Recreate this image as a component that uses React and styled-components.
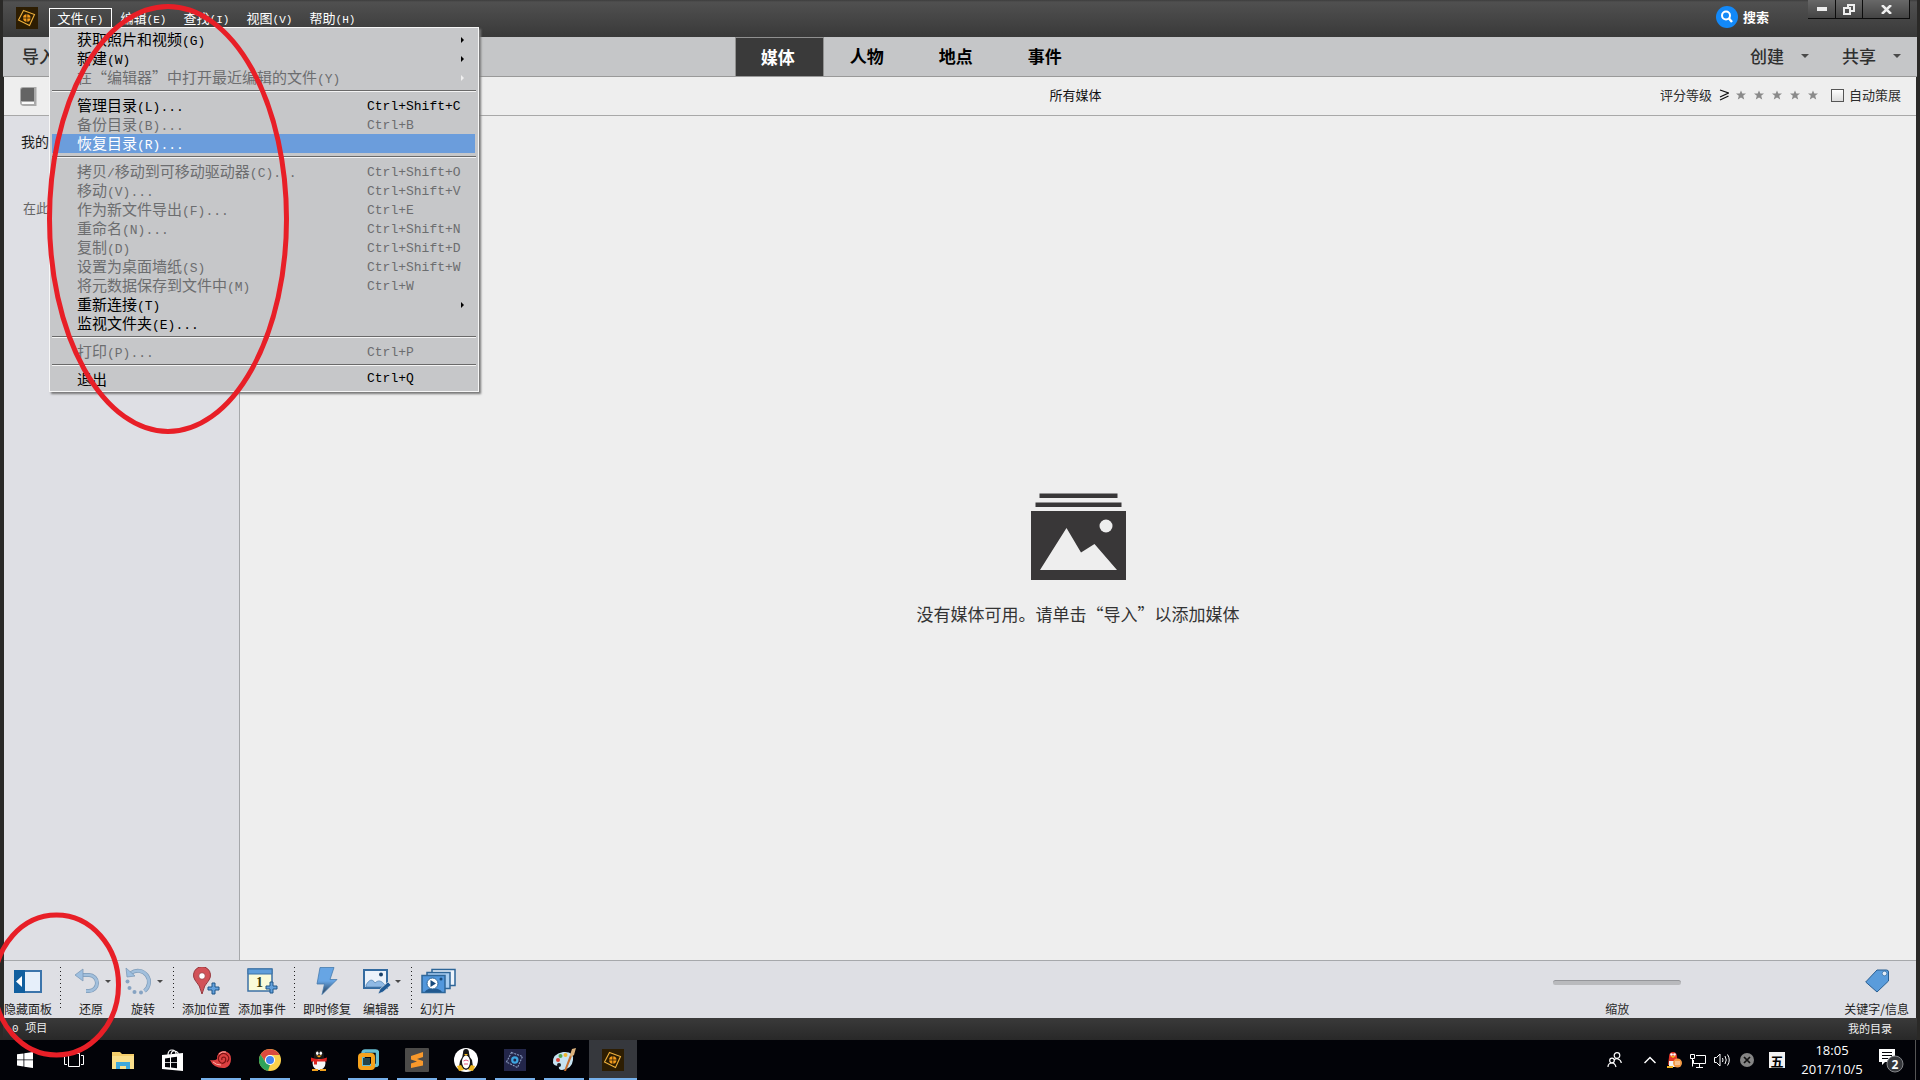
import React from "react";
import styled, { createGlobalStyle, css } from "styled-components";

const sans = `"Noto Sans CJK SC", "Noto Sans", sans-serif`;
const mono = `"Liberation Mono", "Noto Sans CJK SC", monospace`;

const GlobalStyle = createGlobalStyle`
  *, *::before, *::after { box-sizing: border-box; }
  html, body { margin: 0; height: 100%; }
  body { background: #2b2b2b; font-family: ${sans}; font-size: 13px; color: #2c2c2c; overflow: hidden; }
  #root { height: 100%; }
  button, input { font: inherit; color: inherit; margin: 0; }
  button { background: none; border: 0; padding: 0; white-space: nowrap; }
  svg { display: block; flex: none; }
`;

const Screen = styled.div`
  position: relative;
  display: flex;
  flex-direction: column;
  height: 100vh;
`;

const AppWindow = styled.div`
  flex: 1;
  display: flex;
  flex-direction: column;
  min-height: 0;
  padding: 0 3px;
  background: #2a2927;
`;

/* ---------- title bar ---------- */

const TitleBar = styled.header`
  display: flex;
  align-items: flex-start;
  height: 37px;
  padding: 0 7px 0 13px;
  background: linear-gradient(#3d3d3d 0, #505050 2px, #393939 100%);
  color: #fff;
`;

const AppLogo = styled.div`
  padding-top: 7px;
  margin-right: 11px;
`;

const MenuBar = styled.nav`
  display: flex;
  padding-top: 8px;
  flex: 1;
`;

const MenuSlot = styled.div`
  position: relative;
`;

const MenuButton = styled.button`
  width: 63px;
  height: 20px;
  padding-bottom: 2px;
  line-height: 17px;
  border: 1px solid ${(p) => (p.$open ? "#fff" : "transparent")};
  border-bottom: 0;
  font-size: 13px;
  color: #fff;
`;

const Latin = styled.span`
  font-family: ${mono};
  font-size: ${(p) => (p.$small ? "11px" : "13px")};
`;

const Dropdown = styled.div`
  position: absolute;
  z-index: 5;
  top: 19px;
  left: 0;
  width: 430px;
  padding: 2px;
  border: 1px solid #f6f6f6;
  background: #c6c7c9;
  box-shadow: 2px 2px 2px #777;
`;

const MenuItem = styled.button`
  display: grid;
  grid-template-columns: 1fr 97px;
  align-items: center;
  width: 423px;
  height: 19px;
  padding: 0 11px 2px 25px;
  text-align: left;
  font-size: 15px;
  line-height: 17px;
  color: ${(p) => (p.$active ? "#fff" : p.disabled ? "#6c6d6f" : "#000")};
  background: ${(p) => (p.$active ? "#6b9ddc" : "transparent")};
`;

const MenuRule = styled.hr`
  height: 2px;
  margin: 3px 0 4px;
  border: 0;
  border-top: 1px solid #6a6a6a;
  background: #f4f4f4;
`;

const Arrow = styled.span`
  justify-self: end;
  border: 3px solid transparent;
  border-left-color: ${(p) => (p.$dim ? "#efefef" : "#000")};
  border-right: 0;
`;

const SearchButton = styled.button`
  display: flex;
  align-items: center;
  gap: 5px;
  height: 33px;
  margin-right: 39px;
  font-size: 13px;
  line-height: 18px;
  font-weight: 700;
`;

const WindowButtons = styled.div`
  display: flex;
  border: 1px solid #0c0c0c;
  border-top: 0;
  border-left: 0;
`;

const WindowButton = styled.button`
  display: grid;
  place-items: center;
  width: ${(p) => (p.$wide ? "47px" : "27px")};
  height: 18px;
  background: linear-gradient(#686868, #444);

  & + & { border-left: 1px solid #0c0c0c; }
`;

/* ---------- mode bar ---------- */

const ModeBar = styled.div`
  display: grid;
  grid-template-columns: 47fr auto 53fr;
  height: 40px;
  background: #c5c6c8;
  border-bottom: 1px solid #999;
  font-size: 17px;
`;

const ModeSide = styled.div`
  display: flex;
  align-items: center;
  justify-content: ${(p) => (p.$end ? "flex-end" : "flex-start")};
  padding: 0 16px 2px 19px;
`;

const ModeAction = styled.button`
  display: flex;
  align-items: center;
  gap: 17px;
  font-weight: 500;
  color: #2f2f2f;
`;

const ModeActions = styled.div`
  display: flex;
  gap: 33px;
`;

const Caret = styled.span`
  border: ${(p) => (p.$big ? "4px" : "3px")} solid transparent;
  border-top-color: #4a4a4a;
  border-bottom: 0;
`;

const Modes = styled.div`
  display: flex;
`;

const ModeTab = styled.button`
  width: 89px;
  padding: 0 4px 2px 0;
  font-weight: 700;
  color: ${(p) => (p.$on ? "#fff" : "#000")};
  ${(p) =>
    p.$on &&
    css`
      background: #3a3a3a;
      border: 1px solid #909090;
      border-bottom: 0;
    `}
`;

/* ---------- filter bar ---------- */

const Inset = styled.div`
  display: flex;
  flex-direction: column;
  flex: 1;
  min-height: 0;
  padding: 0 1px;
`;

const FilterBar = styled.div`
  display: grid;
  grid-template-columns: 239px 1fr auto;
  align-items: center;
  height: 39px;
  padding: 0 15px 2px 0;
  background: #eee;
  border-bottom: 1px solid #a8a8a8;
`;

const FilterLead = styled.div`
  padding: 2px 0 0 16px;
`;

const FilterTitle = styled.h1`
  margin: 0;
  padding-left: 248px;
  text-align: center;
  font-size: 13px;
  font-weight: 400;
  line-height: 20px;
  color: #111;
`;

const Rating = styled.div`
  display: flex;
  align-items: center;
  gap: 7px;
  line-height: 20px;
`;

const Stars = styled.div`
  display: flex;
  gap: 8px;
`;

const CheckLabel = styled.label`
  display: flex;
  align-items: center;
  gap: 5px;
  margin-left: 6px;
`;

const CheckBox = styled.input`
  appearance: none;
  width: 13px;
  height: 13px;
  border: 1px solid #555;
  background: linear-gradient(#fff, #ddd);
`;

/* ---------- workspace ---------- */

const Workspace = styled.div`
  display: grid;
  grid-template-columns: 236px 1fr;
  flex: 1;
  min-height: 0;
`;

const Sidebar = styled.aside`
  padding: 15px 17px;
  background: #dedfe4;
  border-right: 1px solid #a6a8ab;
`;

const SidebarTitle = styled.h2`
  margin: 0 0 47px;
  font-size: 14px;
  font-weight: 400;
  line-height: 20px;
  color: #1c1c1c;
`;

const SidebarHint = styled.p`
  margin: 0;
  padding-left: 2px;
  font-size: 13px;
  line-height: 20px;
  color: #666;
`;

const Canvas = styled.main`
  display: flex;
  flex-direction: column;
  align-items: center;
  justify-content: center;
  gap: 22px;
  padding-top: 42px;
  background: #eee;
`;

const EmptyText = styled.p`
  margin: 0;
  font-size: 17px;
  line-height: 24px;
  color: #333;
`;

/* ---------- tool bar ---------- */

const ToolBar = styled.footer`
  display: flex;
  justify-content: space-between;
  height: 58px;
  padding: 6px 7px 0 0;
  background: #dedfe4;
  border-top: 1px solid #a6a8ab;
`;

const ToolGroup = styled.div`
  display: flex;
  gap: ${(p) => (p.$far ? "163px" : "8px")};
`;

const Tool = styled.button`
  display: flex;
  flex-direction: column;
  align-items: center;
  gap: 6px;
  min-width: ${(p) => (p.$menu ? "44px" : "0")};
  font-size: 12px;
  line-height: 16px;
  color: #222;
`;

const ToolIcon = styled.span`
  display: flex;
  align-items: center;
  justify-content: center;
  gap: 4px;
  height: 28px;
  padding-left: ${(p) => (p.$menu ? "2px" : "0")};
`;

const ToolRule = styled.span`
  width: 1px;
  height: 42px;
  background: repeating-linear-gradient(#222 0 1px, transparent 1px 4px);
`;

const ZoomField = styled.label`
  display: flex;
  flex-direction: column;
  align-items: center;
  gap: 6px;
  font-size: 12px;
  line-height: 16px;
`;

const ZoomSlot = styled.span`
  display: flex;
  align-items: center;
  height: 28px;
  padding-top: 2px;
`;

const ZoomRange = styled.input`
  appearance: none;
  width: 128px;
  height: 5px;
  border-radius: 3px;
  background: #b9babd;
  border-top: 1px solid #95969a;

  &::-webkit-slider-thumb { appearance: none; width: 0; height: 0; }
`;

const StatusBar = styled.div`
  display: flex;
  justify-content: space-between;
  align-items: center;
  height: 22px;
  padding: 0 25px 2px 9px;
  background: linear-gradient(#3a3a3a, #282828);
  font-size: 11px;
  line-height: 18px;
  color: #eee;
`;

/* ---------- system task bar ---------- */

const TaskBar = styled.div`
  display: flex;
  justify-content: space-between;
  height: 40px;
  background: #020308;
`;

const TaskList = styled.div`
  display: flex;
  gap: 1px;
  padding-left: 1px;
`;

const Task = styled.button`
  display: grid;
  place-items: center;
  width: 48px;
  height: 40px;
  position: relative;
  background: ${(p) => (p.$active ? "#36383d" : "transparent")};
  ${(p) =>
    (p.$running || p.$active) &&
    css`
      &::after {
        content: "";
        position: absolute;
        left: ${p.$active ? "0" : "4px"};
        right: ${p.$active ? "0" : "4px"};
        bottom: 0;
        height: 2px;
        background: #76b0ea;
      }
    `}
`;

const Tray = styled.div`
  display: flex;
  align-items: center;
  padding-right: 11px;
  border-right: 1px solid #555;
  margin-right: 4px;
  color: #fff;
`;

const TrayIcons = styled.div`
  display: flex;
  align-items: center;
  gap: 8px;
`;

const TrayButton = styled.button`
  display: grid;
  place-items: center;
  min-width: 16px;
  height: 24px;
  margin-right: ${(p) => (p.$apart ? "12px" : "0")};
`;

const InputMode = styled.button`
  width: 16px;
  height: 16px;
  margin: 0 16px 0 6px;
  background: #f2f2f2;
  color: #000;
  font-size: 13px;
  font-weight: 700;
  line-height: 15px;
`;

const Clock = styled.time`
  font-family: "Open Sans", "Noto Sans", sans-serif;
  font-size: 13px;
  line-height: 19px;
  text-align: center;
  width: 62px;
  margin-right: 16px;
`;

const Markup = styled.svg`
  position: absolute;
  left: 0;
  top: ${(p) => (p.$low ? "auto" : "0")};
  bottom: ${(p) => (p.$low ? "0" : "auto")};
  z-index: 10;
  pointer-events: none;
  fill: none;
  stroke: #e81f27;
  stroke-width: 5;
`;

/* ---------- drawings ---------- */

const ElementsLogo = ({ blue }) => {
  const c = blue ? "#8b9cc0" : "#eeb03c";
  const d = blue ? "#3da6e0" : "#f29a1c";
  return (
    <svg width="22" height="22" viewBox="0 0 22 22">
      <rect width="22" height="22" fill={blue ? "#23264a" : "#2d1d02"} />
      <path d="M7.500 3.500 18.500 7.500 13.500 18.500 2.500 13Z" fill="none" stroke={c} strokeWidth="1.100" strokeDasharray={blue ? "2 1" : "none"} />
      <circle cx="10.800" cy="11" r="3.700" fill={d} />
      {blue ? <circle cx="10.800" cy="11" r="1.500" fill="#23264a" /> : <path d="M10.800 6.500v9M6.300 11h9" stroke="#2d1d02" strokeWidth=".8" />}
    </svg>
  );
};

const SearchIcon = () => (
  <svg width="22" height="22" viewBox="0 0 22 22" fill="none">
    <circle cx="11" cy="11" r="11" fill="#1389f8" />
    <circle cx="10" cy="9.500" r="4" stroke="#fff" strokeWidth="2" />
    <path d="m13 12.500 3 3.500" stroke="#fff" strokeWidth="2.400" />
  </svg>
);

const BookIcon = () => (
  <svg width="17" height="19" viewBox="0 0 17 19">
    <path d="M3 0h13.500v19H4Q0 19 0 15V3Q0 0 3 0" fill="#aaa" />
    <path d="M3 1h11v13H1V3Q1 1 3 1" fill="#646464" />
    <path d="M2 15h12v2H3Q1 17 2 15" fill="#fafafa" />
  </svg>
);

const Star = () => (
  <svg width="10" height="10" viewBox="0 0 10 10">
    <path d="m5 .5 1.300 3H10L7.200 5.700 8.200 9.500 5 7.400 1.800 9.500l1-3.800L0 3.500h3.700Z" fill="#8a8a8a" />
  </svg>
);

const AtLeast = () => (
  <svg width="10" height="12" viewBox="0 0 10 12" fill="none" stroke="#111" strokeWidth="1.200">
    <path d="m1 1 8.500 3L1 8M1 11l8.500-4" />
  </svg>
);

const MediaIcon = () => (
  <svg width="95" height="87" viewBox="0 0 95 87" fill="#393738">
    <path d="M8.500 0.500h78v4.500h-78zM4.500 9.500h86v4.500h-86zM0 18h95v69H0z" />
    <path d="m9 77 26.500-42L50 59.500l13.500-8.500L86 77Z" fill="#eee" />
    <circle cx="75" cy="33" r="6.500" fill="#eee" />
  </svg>
);

const PanelIcon = () => (
  <svg width="28" height="23" viewBox="0 0 28 23">
    <path d="M1 1h26v21H1z" fill="#e6effa" stroke="#3b74ab" strokeWidth="2" />
    <path d="M0 0h11v23H0z" fill="#115f9f" />
    <path d="M8 6v11l-6-5.500z" fill="#fff" />
  </svg>
);

const UndoIcon = () => (
  <svg width="28" height="26" viewBox="0 0 28 26" fill="none">
    <path d="M10 7h6a8 8 0 0 1 0 16h-3" stroke="#7e9bb8" strokeWidth="4" />
    <path d="M10 7h6a8 8 0 0 1 0 16h-3" stroke="#a1bfdc" strokeWidth="2.600" />
    <path d="M10 1v12L2 7z" fill="#9dbfe0" stroke="#7e9bb8" strokeWidth=".8" />
  </svg>
);

const RotateIcon = () => (
  <svg width="28" height="28" viewBox="0 0 28 28" fill="none">
    <path d="M6 6a10.500 10.500 0 1 1 13.500 18" stroke="#7e9bb8" strokeWidth="4" />
    <path d="M6 6a10.500 10.500 0 1 1 13.500 18" stroke="#a1bfdc" strokeWidth="2.600" />
    <path d="M1 1 2 10l8-1z" fill="#9dbfe0" stroke="#7e9bb8" strokeWidth=".8" />
    <g fill="#86a3c2">
      <circle cx="2.500" cy="14.500" r="2" />
      <circle cx="4.500" cy="21" r="2" />
      <circle cx="9.500" cy="25" r="2" />
      <circle cx="16" cy="25.500" r="2" />
    </g>
  </svg>
);

const plus = "M4 0h3v4h4v3H7v4H4V7H0V4h4z";

const PinIcon = () => (
  <svg width="28" height="28" viewBox="0 0 28 28">
    <path d="M10 27Q8 18 3 13A8.500 8.500 0 1 1 17 13Q12 18 10 27" fill="#d25258" stroke="#96363c" />
    <circle cx="10" cy="9" r="3.300" fill="#fff" stroke="#96363c" strokeWidth=".8" />
    <path d={plus} transform="translate(16 16)" fill="#63a0dc" stroke="#1f5688" />
  </svg>
);

const EventIcon = () => (
  <svg width="31" height="26" viewBox="0 0 31 26">
    <path d="M1 1h24v22H1z" fill="#fafbd9" stroke="#3c72a5" strokeWidth="1.500" />
    <path d="M1 1h24v5H1z" fill="#5f9edb" stroke="#3c72a5" />
    <text x="9" y="19" fontFamily="Liberation Serif, serif" fontWeight="700" fontSize="14" fill="#3b3d10">1</text>
    <path d={plus} transform="translate(19 14)" fill="#63a0dc" stroke="#1f5688" />
  </svg>
);

const BoltIcon = () => (
  <svg width="22" height="28" viewBox="0 0 22 28">
    <defs>
      <linearGradient id="bolt" x2="0" y2="1">
        <stop offset=".5" stopColor="#67a5e4" />
        <stop offset="1" stopColor="#24394f" />
      </linearGradient>
    </defs>
    <path d="M4 .5h14L14 12.500h7L6 27.500 8.500 17H1z" fill="url(#bolt)" stroke="#467bad" strokeWidth=".8" />
  </svg>
);

const EditorIcon = () => (
  <svg width="28" height="27" viewBox="0 0 28 27">
    <path d="M1 2h23v18H1z" fill="#ecf2fa" stroke="#346ba0" strokeWidth="2" />
    <path d="M3 17c3-5 6-7 9-2 3-3 6-3 10 2v2H3z" fill="#8fb9e4" stroke="#4b7dab" strokeWidth=".7" />
    <circle cx="18" cy="6.500" r="2" fill="#173f68" />
    <path d="m15 26 2-5 8-7 3 3-8 7z" fill="#215a93" stroke="#dedfe4" strokeWidth=".7" />
  </svg>
);

const SlidesIcon = () => (
  <svg width="35" height="26" viewBox="0 0 35 26" stroke="#2e6698">
    <path d="M11 1.500h23v16H11z" fill="#eff5fc" strokeWidth="1.500" />
    <path d="M6 4.500h23v16H6z" fill="#a8cdf0" strokeWidth="1.500" />
    <path d="M1 7.500h23v17H1z" fill="#5297dc" strokeWidth="1.500" />
    <path d="M4 24c2-5 14-5 17 0z" fill="#21598f" stroke="none" />
    <circle cx="11.500" cy="15.500" r="5.500" fill="#fff" />
    <path d="M9.500 12v7l5.500-3.500z" fill="#174a7c" stroke="none" />
    <circle cx="20" cy="11" r="1.500" fill="#174a7c" stroke="none" />
  </svg>
);

const TagIcon = () => (
  <svg width="24" height="24" viewBox="0 0 24 24">
    <path d="M12 1h9.500q2 0 2 2v9L12 23 .7 13z" fill="#5a9cdb" stroke="#2a5f92" />
    <circle cx="19.500" cy="4.500" r="2.300" fill="#e6eef8" stroke="#2a5f92" strokeWidth=".6" />
  </svg>
);

const StartIcon = () => (
  <svg width="16" height="16" viewBox="0 0 16 16" fill="#fff">
    <path d="M0 2.300 6.500 1.400v6.100H0zM7.300 1.300 16 0v7.500H7.300zM0 8.300h6.500v6.200L0 13.600zM7.300 8.300H16V16l-8.700-1.300z" />
  </svg>
);

const TaskViewIcon = () => (
  <svg width="20" height="14" viewBox="0 0 20 14" fill="none" stroke="#fff">
    <path d="M4.500.5h11v13h-11zM3 2.500H.5v9H3M17 2.500h2.500v9H17" />
  </svg>
);

const FolderIcon = () => (
  <svg width="22" height="19" viewBox="0 0 22 19">
    <path d="M0 1h8l2 2h12v15H0z" fill="#f5cf6b" />
    <path d="M0 5h22v13H0z" fill="#fbe08c" />
    <path d="M4 11h14v7h-4v-3H8v3H4z" fill="#3fa9dd" />
  </svg>
);

const StoreIcon = () => (
  <svg width="21" height="23" viewBox="0 0 21 23">
    <path d="M6 6Q6 1 10 1t4 4M9 5q1-4 4-3 4 1 3 4" fill="none" stroke="#fff" strokeWidth="1.200" />
    <path d="M0 6 21 4v18L0 20z" fill="#fff" />
    <path d="m3 9.500 5-.7v4.400H3zM9 8.600l6-.8v5.400H9zM3 14h5v4.400l-5-.5zM9 14h6v5.200l-6-.7z" fill="#020308" />
  </svg>
);

const SnailIcon = () => (
  <svg width="22" height="20" viewBox="0 0 22 20">
    <path d="M0 10q5 1 7-1 0-8 7-8 7 1 7 8t-6 9q-11 1-15-8" fill="#dc4040" />
    <path d="M17 12q3-3 1-6-3-4-7-2-4 3-2 7 3 4 6 1 2-4-1-5-3 0-2 3" fill="none" stroke="#7b1212" strokeWidth="1.200" />
    <path d="M9 4q3-3 7-2M3 12q3 3 8 3" stroke="#ffb0a8" fill="none" />
  </svg>
);

const ChromeIcon = () => (
  <svg width="22" height="22" viewBox="0 0 22 22">
    <circle cx="11" cy="11" r="11" fill="#fbd04b" />
    <path d="M1.500 5.500A11 11 0 0 1 20.600 6H11a5 5 0 0 0-4.500 7z" fill="#dc4b3e" />
    <path d="M1.500 5.500 6.700 13.500 11 16l-2 5.900A11 11 0 0 1 1.500 5.500" fill="#2fa35a" />
    <circle cx="11" cy="11" r="5" fill="#fff" />
    <circle cx="11" cy="11" r="4" fill="#4384ee" />
  </svg>
);

const QQIcon = () => (
  <svg width="18" height="21" viewBox="0 0 18 21">
    <ellipse cx="9" cy="13" rx="6.500" ry="7" fill="#f6f6f6" />
    <path d="M4 6q0-6 5-6t5 6v3H4z" fill="#181818" />
    <ellipse cx="7.300" cy="3.300" rx="1.300" ry="1.700" fill="#fff" />
    <ellipse cx="10.800" cy="3.300" rx="1.300" ry="1.700" fill="#fff" />
    <path d="M6 5.500h6L9 7.500zM2 19h6v2H2zM10 19h6v2h-6z" fill="#f3a11c" />
    <path d="M1 7.500q8 3.500 16 0l-.5 4H7v3H4v-3H1z" fill="#dd2520" />
  </svg>
);

const VmwareIcon = () => (
  <svg width="21" height="22" viewBox="0 0 21 22" fill="none">
    <rect x="5" y="2" width="14.500" height="14.500" rx="2" stroke="#68bed2" strokeWidth="3.500" />
    <rect x="2" y="6" width="13" height="13" rx="2" stroke="#f6a31d" strokeWidth="4" />
    <rect x="5" y="9" width="7" height="7" fill="#24454b" />
  </svg>
);

const SublimeIcon = () => (
  <svg width="24" height="24" viewBox="0 0 24 24">
    <rect width="24" height="24" rx="1" fill="#4c4b49" />
    <path d="m6 8 12-4v5l-6 2 6 2v4.500L6 20v-4.500l6-2-6-2z" fill="#f8992c" />
  </svg>
);

const PenguinIcon = () => (
  <svg width="24" height="24" viewBox="0 0 24 24">
    <circle cx="12" cy="12" r="12" fill="#fff" />
    <path d="M9 5q0-4 3-4t3 4 3 7l1 7-7 3-7-3 1-6q3-4 3-8" fill="#151515" />
    <ellipse cx="12" cy="14" rx="4" ry="6.500" fill="#fff" />
    <path d="M10 6h4l-2 2zM3 18l4-1 3 5-5 1zM21 18l-4-1-3 5 5 1z" fill="#efb51c" />
    <path d="M9.500 13q2.500-2 5 0M10 16h4" stroke="#e1567f" fill="none" />
  </svg>
);

const PaintIcon = () => (
  <svg width="24" height="24" viewBox="0 0 24 24">
    <path d="M1 15Q0 6 11 4q11-1 10 8-1 9-11 10-4 0-3-4-5 0-6-3" fill="#c6e3f2" />
    <circle cx="6" cy="12" r="2" fill="#dc4436" />
    <circle cx="8.500" cy="8" r="2" fill="#52a74e" />
    <circle cx="13.500" cy="7" r="2" fill="#f0b52f" />
    <circle cx="7" cy="17" r="2" fill="#14191f" />
    <path d="m12 23 6-16 2 1-6 15z" fill="#c56e2f" />
    <path d="m18 7 2-6 4-1-2 7-3 2z" fill="#dcb27d" />
  </svg>
);

const PeopleIcon = () => (
  <svg width="15" height="16" viewBox="0 0 15 16" fill="none" stroke="#fff" strokeWidth="1.200">
    <circle cx="10" cy="3.500" r="2.800" />
    <circle cx="5" cy="8.500" r="2.300" />
    <path d="M1 15q0-4 4-4 3 0 4 4M7 8q2-2 4-1 3 1 3.300 4" />
  </svg>
);

const ChevronIcon = () => (
  <svg width="12" height="8" viewBox="0 0 12 8" fill="none" stroke="#fff" strokeWidth="1.500">
    <path d="m.5 7 5.500-5.500L11.500 7" />
  </svg>
);

const TrayQQIcon = () => (
  <svg width="16" height="16" viewBox="0 0 16 16">
    <path d="M3 5q0-5 4-5t4 5l1 8H2z" fill="#e23428" />
    <path d="M3 9h6v6H3z" fill="#f4f4f4" />
    <circle cx="5.500" cy="2.500" r="1.300" fill="#fff" />
    <circle cx="8.500" cy="2.500" r="1.300" fill="#fff" />
    <path d="M4 4h6L7 6zM1 14h6v2H1z" fill="#f2b21f" />
    <circle cx="11.500" cy="11" r="4.500" fill="#f49a45" />
    <path d="M9 10h5M9 12h5" stroke="#fff" strokeWidth=".8" />
  </svg>
);

const NetworkIcon = () => (
  <svg width="16" height="15" viewBox="0 0 16 15" fill="none" stroke="#fff">
    <path d="M6 2.500h9.500v8H3.500V7M9.500 11v3M6 14.500h7M.5 1.500h4v4h-4zM2.500 5.500v8" />
  </svg>
);

const SpeakerIcon = () => (
  <svg width="17" height="14" viewBox="0 0 17 14" fill="none" stroke="#fff">
    <path d="M.5 4.500h2L6 1v12L2.500 9.500h-2zM8.500 5q1 2 0 4M11 3q2.500 4 0 8M13.500 1.500q3.500 5.500 0 11" />
  </svg>
);

const BlockedIcon = () => (
  <svg width="14" height="14" viewBox="0 0 14 14">
    <circle cx="7" cy="7" r="7" fill="#858585" />
    <path d="m4 4 6 6m0-6-6 6" stroke="#111" strokeWidth="1.700" />
  </svg>
);

const NoticeIcon = () => (
  <svg width="25" height="25" viewBox="0 0 25 25">
    <path d="M0 1h16v13H6l-3 3v-3H0z" fill="#fff" />
    <path d="M3 4.500h10M3 7.500h10M3 10.500h6" stroke="#020308" />
    <circle cx="16" cy="16" r="8" fill="#35373b" stroke="#84868a" strokeWidth="1" />
    <text x="16" y="20.500" textAnchor="middle" fontFamily="Open Sans, sans-serif" fontSize="12" fontWeight="700" fill="#fff">2</text>
  </svg>
);

/* ---------- data ---------- */

const menus = [["文件", "(F)"], ["编辑", "(E)"], ["查找", "(I)"], ["视图", "(V)"], ["帮助", "(H)"]];

const fileMenu = [
  { text: ["获取照片和视频", "(G)"], sub: true },
  { text: ["新建", "(W)"], sub: true },
  { text: ["在“编辑器”中打开最近编辑的文件", "(Y)"], sub: true, off: true },
  null,
  { text: ["管理目录", "(L)..."], keys: "Ctrl+Shift+C" },
  { text: ["备份目录", "(B)..."], keys: "Ctrl+B", off: true },
  { text: ["恢复目录", "(R)..."], active: true },
  null,
  { text: ["拷贝", "/", "移动到可移动驱动器", "(C)..."], keys: "Ctrl+Shift+O", off: true },
  { text: ["移动", "(V)..."], keys: "Ctrl+Shift+V", off: true },
  { text: ["作为新文件导出", "(F)..."], keys: "Ctrl+E", off: true },
  { text: ["重命名", "(N)..."], keys: "Ctrl+Shift+N", off: true },
  { text: ["复制", "(D)"], keys: "Ctrl+Shift+D", off: true },
  { text: ["设置为桌面墙纸", "(S)"], keys: "Ctrl+Shift+W", off: true },
  { text: ["将元数据保存到文件中", "(M)"], keys: "Ctrl+W", off: true },
  { text: ["重新连接", "(T)"], sub: true },
  { text: ["监视文件夹", "(E)..."] },
  null,
  { text: ["打印", "(P)..."], keys: "Ctrl+P", off: true },
  null,
  { text: ["退出"], keys: "Ctrl+Q" },
];

const tools = [
  { label: "隐藏面板", icon: PanelIcon },
  null,
  { label: "还原", icon: UndoIcon, menu: true },
  { label: "旋转", icon: RotateIcon, menu: true },
  null,
  { label: "添加位置", icon: PinIcon },
  { label: "添加事件", icon: EventIcon },
  null,
  { label: "即时修复", icon: BoltIcon },
  { label: "编辑器", icon: EditorIcon, menu: true },
  null,
  { label: "幻灯片", icon: SlidesIcon },
];

const tasks = [
  { icon: StartIcon },
  { icon: TaskViewIcon },
  { icon: FolderIcon },
  { icon: StoreIcon },
  { icon: SnailIcon, running: true },
  { icon: ChromeIcon, running: true },
  { icon: QQIcon },
  { icon: VmwareIcon, running: true },
  { icon: SublimeIcon, running: true },
  { icon: PenguinIcon, running: true },
  { icon: () => <ElementsLogo blue />, running: true },
  { icon: PaintIcon, running: true },
  { icon: ElementsLogo, active: true },
];

const MixedText = ({ parts, small }) => (
  <span>
    {parts.map((part, i) => (i % 2 ? <Latin key={i} $small={small}>{part}</Latin> : part))}
  </span>
);

const FileMenu = () => (
  <Dropdown>
    {fileMenu.map((item, i) =>
      item ? (
        <MenuItem key={i} disabled={item.off} $active={item.active}>
          <MixedText parts={item.text} />
          {item.keys && <Latin>{item.keys}</Latin>}
          {item.sub && <Arrow $dim={item.off} />}
        </MenuItem>
      ) : (
        <MenuRule key={i} />
      )
    )}
  </Dropdown>
);

export default function App() {
  return (
    <Screen>
      <GlobalStyle />
      <AppWindow>
        <TitleBar>
          <AppLogo><ElementsLogo /></AppLogo>
          <MenuBar>
            {menus.map((parts, i) => (
              <MenuSlot key={parts[0]}>
                <MenuButton $open={i === 0}><MixedText parts={parts} small /></MenuButton>
                {i === 0 && <FileMenu />}
              </MenuSlot>
            ))}
          </MenuBar>
          <SearchButton><SearchIcon />搜索</SearchButton>
          <WindowButtons>
            <WindowButton>
              <svg width="10" height="4"><path d="M0 0h10v4H0z" fill="#eee" /></svg>
            </WindowButton>
            <WindowButton>
              <svg width="12" height="11" fill="none" stroke="#eee" strokeWidth="2">
                <path d="M5 4V1h6v6H8M1 4h6v6H1z" />
              </svg>
            </WindowButton>
            <WindowButton $wide>
              <svg width="11" height="9" stroke="#eee" strokeWidth="2.500"><path d="m1 0 9 9M10 0 1 9" /></svg>
            </WindowButton>
          </WindowButtons>
        </TitleBar>

        <ModeBar>
          <ModeSide><ModeAction>导入</ModeAction></ModeSide>
          <Modes>
            <ModeTab $on>媒体</ModeTab>
            <ModeTab>人物</ModeTab>
            <ModeTab>地点</ModeTab>
            <ModeTab>事件</ModeTab>
          </Modes>
          <ModeSide $end>
            <ModeActions>
              <ModeAction>创建<Caret $big /></ModeAction>
              <ModeAction>共享<Caret $big /></ModeAction>
            </ModeActions>
          </ModeSide>
        </ModeBar>

        <Inset>
          <FilterBar>
            <FilterLead><BookIcon /></FilterLead>
            <FilterTitle>所有媒体</FilterTitle>
            <Rating>
              评分等级
              <AtLeast />
              <Stars><Star /><Star /><Star /><Star /><Star /></Stars>
              <CheckLabel><CheckBox type="checkbox" />自动策展</CheckLabel>
            </Rating>
          </FilterBar>

          <Workspace>
            <Sidebar>
              <SidebarTitle>我的</SidebarTitle>
              <SidebarHint>在此</SidebarHint>
            </Sidebar>
            <Canvas>
              <MediaIcon />
              <EmptyText>没有媒体可用。请单击“导入”以添加媒体</EmptyText>
            </Canvas>
          </Workspace>

          <ToolBar>
            <ToolGroup>
              {tools.map((tool, i) =>
                tool ? (
                  <Tool key={i} $menu={tool.menu}>
                    <ToolIcon $menu={tool.menu}>
                      <tool.icon />
                      {tool.menu && <Caret />}
                    </ToolIcon>
                    {tool.label}
                  </Tool>
                ) : (
                  <ToolRule key={i} />
                )
              )}
            </ToolGroup>
            <ToolGroup $far>
              <ZoomField>
                <ZoomSlot><ZoomRange type="range" disabled /></ZoomSlot>
                缩放
              </ZoomField>
              <Tool>
                <ToolIcon><TagIcon /></ToolIcon>
                关键字/信息
              </Tool>
            </ToolGroup>
          </ToolBar>
        </Inset>

        <StatusBar>
          <span><Latin $small>0 </Latin>项目</span>
          <span>我的目录</span>
        </StatusBar>
      </AppWindow>

      <TaskBar>
        <TaskList>
          {tasks.map((task, i) => (
            <Task key={i} $running={task.running} $active={task.active}><task.icon /></Task>
          ))}
        </TaskList>
        <Tray>
          <TrayIcons>
            <TrayButton $apart><PeopleIcon /></TrayButton>
            <TrayButton><ChevronIcon /></TrayButton>
            <TrayButton><TrayQQIcon /></TrayButton>
            <TrayButton><NetworkIcon /></TrayButton>
            <TrayButton><SpeakerIcon /></TrayButton>
            <TrayButton><BlockedIcon /></TrayButton>
            <InputMode>五</InputMode>
          </TrayIcons>
          <Clock>18:05<br />2017/10/5</Clock>
          <TrayButton><NoticeIcon /></TrayButton>
        </Tray>
      </TaskBar>

      <Markup width="300" height="440"><ellipse cx="168" cy="219" rx="118.500" ry="212.500" /></Markup>
      <Markup $low width="130" height="180"><ellipse cx="56.500" cy="85" rx="62" ry="70" /></Markup>
    </Screen>
  );
}
